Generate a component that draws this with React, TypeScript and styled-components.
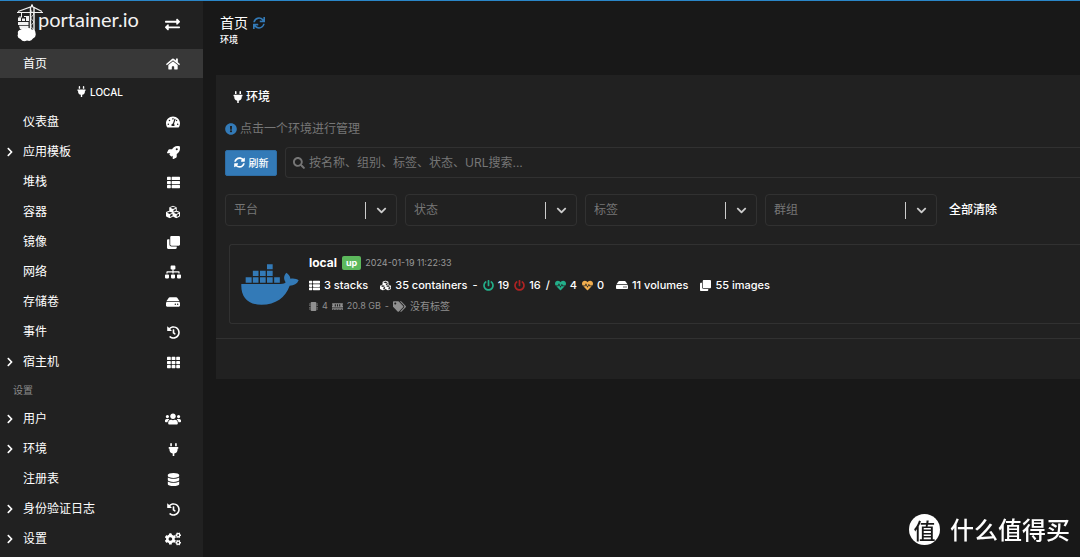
import React from "react";
import styled, { createGlobalStyle } from "styled-components";
import {
  FaExchangeAlt, FaHome, FaPlug, FaTachometerAlt, FaRocket, FaThList, FaCubes, FaClone,
  FaSitemap, FaHdd, FaHistory, FaTh, FaUsers, FaDatabase, FaCogs, FaSyncAlt, FaSync,
  FaExclamationCircle, FaSearch, FaPowerOff, FaHeartbeat, FaMicrochip, FaMemory, FaTags,
  FaChevronRight, FaChevronDown,
} from "react-icons/fa";
import type { IconType } from "react-icons";

const GlobalStyle = createGlobalStyle`
  *, *::before, *::after { box-sizing: border-box; }
  body {
    margin: 0;
    background: #181818;
    color: #ffffff;
    font: 12px/20px Inter, "Noto Sans CJK SC", sans-serif;
  }
  button, input, select { font: inherit; color: inherit; }
  svg { flex: none; display: block; }
`;

const Page = styled.div`
  display: flex;
  min-height: 100vh;
  border-top: 1px solid #2a86c8;
  overflow: hidden;
`;

const Sidebar = styled.aside`
  flex: none;
  width: 203px;
  background: #212121;
`;

const Brand = styled.div`
  display: flex;
  align-items: center;
  justify-content: space-between;
  height: 48px;
  padding: 0 23px 4px 16px;
`;

const BrandLink = styled.a`
  display: flex;
  align-items: flex-start;
  color: #f2f2f2;
  text-decoration: none;
`;

const BrandName = styled.span`
  margin: 3px 0 0 -6px;
  font: 20px/24px Lato, sans-serif;
`;

const IconButton = styled.button`
  display: flex;
  padding: 3px 0 0;
  border: 0;
  background: none;
`;

const Menu = styled.ul`
  margin: 0;
  padding: 0;
  list-style: none;
`;

const MenuLink = styled.a<{ $active?: boolean }>`
  display: grid;
  grid-template-columns: 12px 1fr 16px;
  align-items: center;
  column-gap: 6px;
  height: ${(p) => (p.$active ? 29 : 30)}px;
  padding: 0 22px 0 5px;
  background: ${(p) => (p.$active ? "#383838" : "none")};
  color: #ffffff;
  text-decoration: none;
  svg:first-child { justify-self: start; }
  svg:last-child { justify-self: center; }
`;

const Endpoint = styled.li`
  display: flex;
  align-items: center;
  justify-content: center;
  gap: 3px;
  height: 29px;
  padding: 0 4px 2px 0;
  font-size: 10px;
  font-weight: 500;
`;

const MenuHeading = styled.li`
  padding: 0 13px;
  color: #8a8a8a;
  font-size: 10px;
  line-height: 27px;
`;

const Main = styled.main`
  flex: 1;
  min-width: 0;
  padding: 12px 0 0 13px;
`;

const Title = styled.h1`
  display: flex;
  align-items: center;
  gap: 5px;
  margin: 0;
  padding-left: 4px;
  font-size: 14px;
  font-weight: 400;
  line-height: 20px;
  svg { color: #337ab7; }
`;

const Crumb = styled.p`
  margin: 0 0 28px;
  padding-left: 4px;
  font-size: 9px;
  font-weight: 500;
  line-height: 14px;
`;

const Panel = styled.section`
  padding-bottom: 40px;
  background: #212121;
`;

const PanelTitle = styled.h2`
  display: flex;
  align-items: center;
  gap: 2px;
  margin: 0;
  padding: 12px 16px;
  font-size: 12px;
  font-weight: 500;
  line-height: 20px;
`;

const PanelBody = styled.div`
  padding: 0 0 14px 9px;
  border-bottom: 1px solid #313131;
`;

const Hint = styled.p`
  display: flex;
  align-items: center;
  gap: 3px;
  margin: 0 0 8px;
  color: #767676;
  svg { color: #337ab7; }
`;

const SearchRow = styled.div`
  display: flex;
  align-items: center;
  gap: 8px;
`;

const RefreshButton = styled.button`
  display: flex;
  align-items: center;
  justify-content: center;
  gap: 4px;
  width: 52px;
  height: 26px;
  padding: 0;
  border: 1px solid #2e6da4;
  border-radius: 2px;
  background: #337ab7;
  font-size: 10px;
  font-weight: 500;
`;

const SearchBox = styled.label`
  display: flex;
  flex: 1;
  align-items: center;
  gap: 4px;
  height: 31px;
  padding: 0 7px;
  border: 1px solid #313131;
  border-right: 0;
  border-radius: 4px 0 0 4px;
  color: #767676;
`;

const SearchInput = styled.input`
  flex: 1;
  min-width: 0;
  padding: 0;
  border: 0;
  outline: 0;
  background: none;
  &::placeholder { color: #767676; opacity: 1; }
`;

const Filters = styled.div`
  display: flex;
  align-items: center;
  gap: 8px;
  margin: 16px 0 18px;
`;

const FilterBox = styled.div`
  display: grid;
  grid-template-columns: 1fr 31px;
  align-items: center;
  width: 172px;
  height: 32px;
  border: 1px solid #313131;
  border-radius: 4px;
`;

const FilterSelect = styled.select`
  grid-area: 1 / 1 / 2 / 3;
  width: 100%;
  height: 30px;
  padding: 0 8px;
  border: 0;
  outline: 0;
  appearance: none;
  background: none;
  color: #767676;
`;

const FilterArrow = styled.span`
  grid-area: 1 / 2;
  display: flex;
  align-items: center;
  justify-content: center;
  height: 17px;
  border-left: 1px solid #cccccc;
  color: #cccccc;
  pointer-events: none;
`;

const ClearButton = styled.button`
  padding: 0 4px;
  border: 0;
  background: none;
  font-weight: 500;
`;

const EnvCard = styled.article`
  display: flex;
  align-items: center;
  gap: 10px;
  margin-left: 4px;
  padding: 7px 11px;
  border: 1px solid #313131;
  border-right: 0;
  border-radius: 3px 0 0 3px;
`;

const Line = styled.div<{ $muted?: boolean }>`
  display: flex;
  align-items: center;
  gap: ${(p) => (p.$muted ? 4 : 3)}px;
  height: ${(p) => (p.$muted ? 20 : 22)}px;
  color: ${(p) => (p.$muted ? "#8f8f8f" : "#ffffff")};
  font-size: ${(p) => (p.$muted ? 9 : 11)}px;
  font-weight: ${(p) => (p.$muted ? 400 : 500)};
  white-space: nowrap;
`;

const EnvName = styled.strong`
  font-size: 12px;
  font-weight: 700;
`;

const Badge = styled.span`
  margin: 0 1px 0 2px;
  padding: 0 4px;
  border-radius: 2px;
  background: #5cb85c;
  font-size: 9px;
  font-weight: 700;
  line-height: 14px;
`;

const Stamp = styled.time`
  color: #9a9a9a;
  font-size: 9px;
  font-weight: 400;
`;

const Stat = styled.span<{ $tone?: string; $last?: boolean }>`
  display: flex;
  align-items: center;
  gap: 4px;
  margin-right: ${(p) => (p.$last ? 9 : 2)}px;
  svg { color: ${(p) => p.$tone || "inherit"}; }
`;

const TagText = styled.span`
  font-size: 10px;
`;

const Watermark = styled.div`
  position: fixed;
  right: 10px;
  bottom: 11px;
  display: flex;
  align-items: center;
  gap: 10px;
  font: 500 24px/34px "Noto Sans CJK SC", sans-serif;
`;

const Seal = styled.span`
  width: 31px;
  height: 31px;
  border-radius: 50%;
  background: #ffffff;
  color: #181818;
  font-size: 22px;
  line-height: 30px;
  text-align: center;
`;

function CraneLogo() {
  return (
    <svg width="28" height="38" viewBox="16 3 28 38" fill="none" stroke="#f2f2f2">
      <path d="M17 11.500H43M18 10.500L32 5.500L42 10.500" strokeWidth="1.200" />
      <path d="M32 3.500V6" strokeWidth="2" />
      <path d="M30.500 6V30M34 6V30" strokeWidth="1.400" />
      <path d="M30.500 9L34 13L30.500 17L34 21L30.500 25L34 29" strokeWidth="0.800" />
      <path d="M21.500 12V16M19 16H22M24 15.500H27.500" />
      <path d="M18 16.500H21V20H18ZM22 17.500H25V20H22ZM26 15H29V20H26ZM18 21H28.500V24H18ZM19 24.800H28.500V28H20Z" fill="#f2f2f2" stroke="none" />
      <path d="M21 28.500Q23 26.500 26 28Q29 26 31.500 28.500Q35.500 28 35.500 32Q36.500 36 33 37.500Q31 41 27 39.500Q23 41.500 20.500 38Q16.500 36.500 18 33Q17 29.500 21 28.500Z" fill="#ffffff" stroke="none" />
    </svg>
  );
}

function WhaleLogo() {
  return (
    <svg width="58" height="41" viewBox="47 66 174 123" fill="#337ab7" aria-hidden="true">
      <path d="M61 106h18v16h-18zM82.500 106h17v16h-17zM104 106h17v16h-17zM125 106h17v16h-17zM146.500 106h17v16h-17z" />
      <path d="M82.500 86h17v16h-17zM104 86h17v16h-17zM125 86h17v16h-17zM125 67h17v15h-17z" />
      <path d="M48 126H166C174 126 179 124 181 121C174 111 175 100 183 92C190 97 195 103 195 110C205 108 214 110 220 115C215 126 206 131 193 131C180 166 152 188 108 188C66 188 46 164 48 126Z" />
    </svg>
  );
}

type Entry = { label: string; icon: IconType; nested?: boolean; size?: number };

const mainEntries: Entry[] = [
  { label: "仪表盘", icon: FaTachometerAlt, size: 14 },
  { label: "应用模板", icon: FaRocket, nested: true },
  { label: "堆栈", icon: FaThList },
  { label: "容器", icon: FaCubes, size: 14 },
  { label: "镜像", icon: FaClone },
  { label: "网络", icon: FaSitemap, size: 16 },
  { label: "存储卷", icon: FaHdd, size: 14 },
  { label: "事件", icon: FaHistory },
  { label: "宿主机", icon: FaTh, nested: true },
];

const settingEntries: Entry[] = [
  { label: "用户", icon: FaUsers, nested: true, size: 16 },
  { label: "环境", icon: FaPlug, nested: true },
  { label: "注册表", icon: FaDatabase },
  { label: "身份验证日志", icon: FaHistory, nested: true },
  { label: "设置", icon: FaCogs, nested: true, size: 16 },
];

function MenuItem({ label, icon: Icon, nested, size = 13, active }: Entry & { active?: boolean }) {
  return (
    <li>
      <MenuLink href="#" $active={active}>
        {nested ? <FaChevronRight size={10} /> : <span />}
        <span>{label}</span>
        <Icon size={size} />
      </MenuLink>
    </li>
  );
}

function Filter({ label }: { label: string }) {
  return (
    <FilterBox>
      <FilterSelect aria-label={label}>
        <option>{label}</option>
      </FilterSelect>
      <FilterArrow><FaChevronDown size={11} /></FilterArrow>
    </FilterBox>
  );
}

export default function App() {
  return (
    <>
      <GlobalStyle />
      <Page>
        <Sidebar>
          <Brand>
            <BrandLink href="#">
              <CraneLogo />
              <BrandName>portainer.io</BrandName>
            </BrandLink>
            <IconButton aria-label="Toggle sidebar"><FaExchangeAlt size={15} /></IconButton>
          </Brand>
          <nav>
            <Menu>
              <MenuItem label="首页" icon={FaHome} size={14} active />
              <Endpoint><FaPlug size={11} />LOCAL</Endpoint>
              {mainEntries.map((e) => <MenuItem key={e.label} {...e} />)}
              <MenuHeading>设置</MenuHeading>
              {settingEntries.map((e) => <MenuItem key={e.label} {...e} />)}
            </Menu>
          </nav>
        </Sidebar>
        <Main>
          <Title>首页<FaSync size={12} /></Title>
          <Crumb>环境</Crumb>
          <Panel>
            <PanelTitle><FaPlug size={12} />环境</PanelTitle>
            <PanelBody>
              <Hint><FaExclamationCircle size={12} />点击一个环境进行管理</Hint>
              <SearchRow>
                <RefreshButton><FaSyncAlt size={11} />刷新</RefreshButton>
                <SearchBox>
                  <FaSearch size={12} />
                  <SearchInput aria-label="搜索" placeholder="按名称、组别、标签、状态、URL搜索..." />
                </SearchBox>
              </SearchRow>
              <Filters>
                <Filter label="平台" />
                <Filter label="状态" />
                <Filter label="标签" />
                <Filter label="群组" />
                <ClearButton>全部清除</ClearButton>
              </Filters>
              <EnvCard>
                <WhaleLogo />
                <div>
                  <Line>
                    <EnvName>local</EnvName>
                    <Badge>up</Badge>
                    <Stamp>2024-01-19 11:22:33</Stamp>
                  </Line>
                  <Line>
                    <Stat $last><FaThList size={11} />3 stacks</Stat>
                    <Stat><FaCubes size={11} />35 containers</Stat>
                    <Stat>-</Stat>
                    <Stat $tone="#23ae89"><FaPowerOff size={11} />19</Stat>
                    <Stat $tone="#ae2323"><FaPowerOff size={11} />16</Stat>
                    <Stat>/</Stat>
                    <Stat $tone="#23ae89"><FaHeartbeat size={11} />4</Stat>
                    <Stat $tone="#f0ad4e" $last><FaHeartbeat size={11} />0</Stat>
                    <Stat $last><FaHdd size={12} />11 volumes</Stat>
                    <Stat><FaClone size={11} />55 images</Stat>
                  </Line>
                  <Line $muted>
                    <FaMicrochip size={9} />4
                    <FaMemory size={11} />20.8 GB
                    <span>-</span>
                    <FaTags size={13} /><TagText>没有标签</TagText>
                  </Line>
                </div>
              </EnvCard>
            </PanelBody>
          </Panel>
        </Main>
      </Page>
      <Watermark><Seal>值</Seal>什么值得买</Watermark>
    </>
  );
}
